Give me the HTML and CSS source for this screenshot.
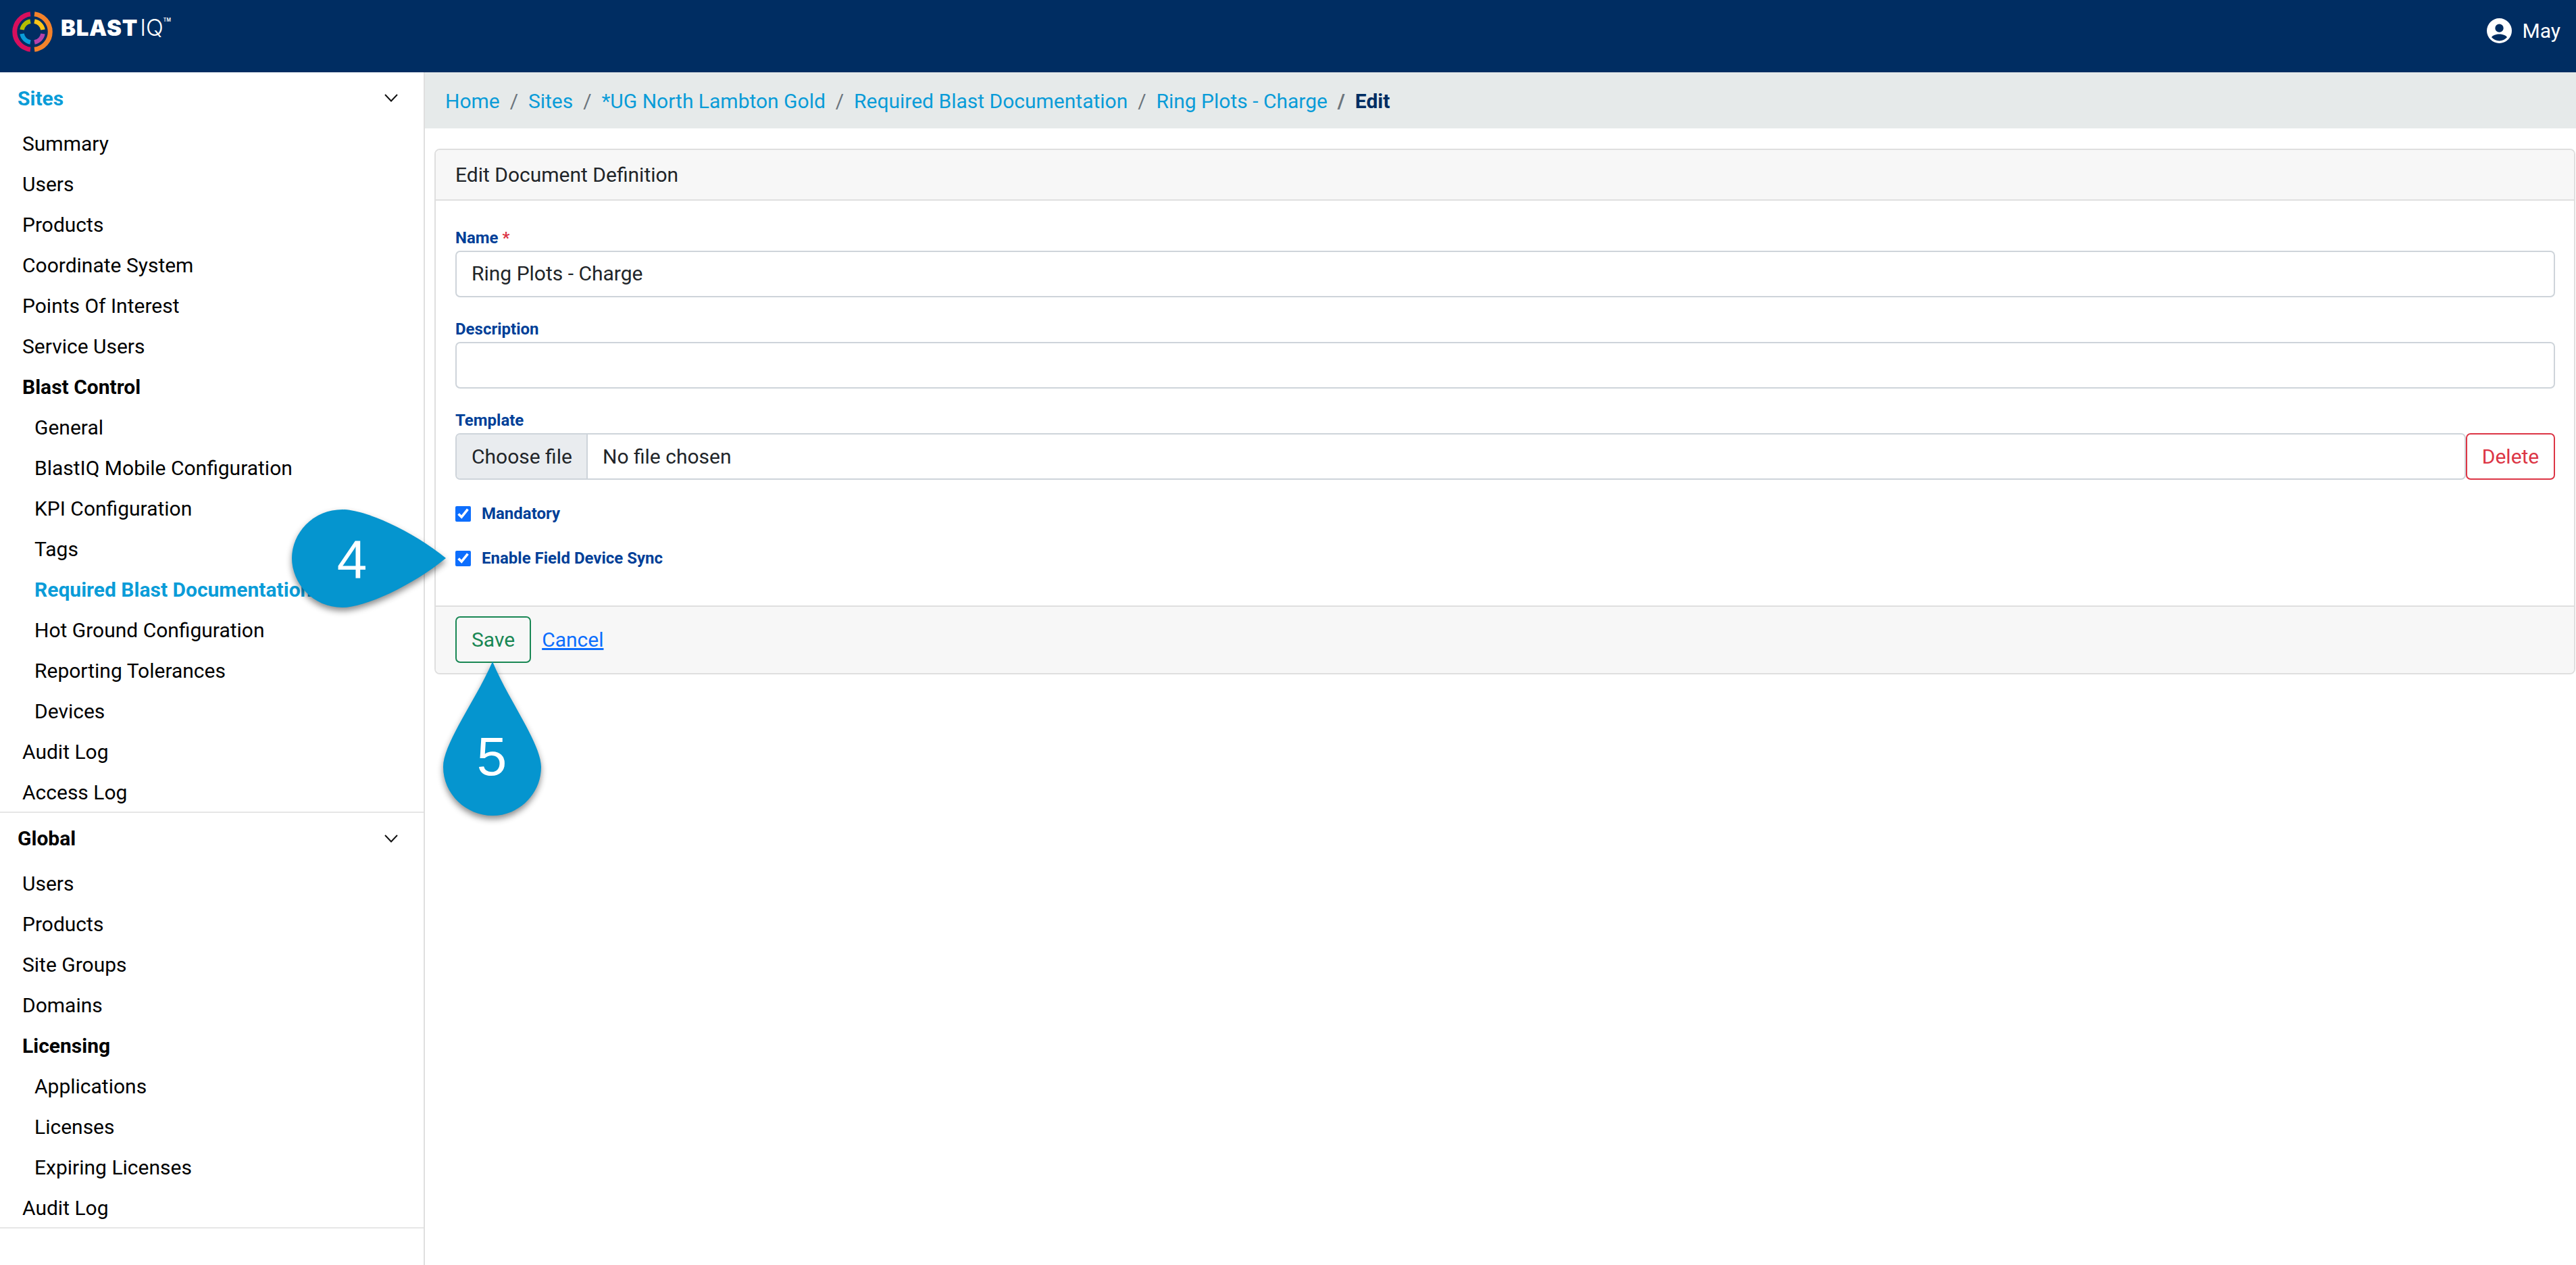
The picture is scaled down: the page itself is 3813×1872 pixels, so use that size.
FILE: index.html
```html
<!DOCTYPE html>
<html lang="en">
<head>
    <meta charset="UTF-8">
    <title>BlastIQ - Edit Document Definition</title>
    <link rel="stylesheet" href="styles.css">
</head>
<body>
    <header class="topbar">
        <a class="logo" href="#">
            <svg class="logo-mark" viewBox="0 0 60 60" width="60" height="60">
                <g fill="none" stroke-width="7">
                    <path stroke="#d80f5d" d="M27 3.700 A26.500 26.500 0 0 0 27 56.300"/>
                    <path stroke="#f5822a" d="M33 3.700 A26.500 26.500 0 0 1 33 56.300"/>
                </g>
                <g fill="none" stroke-width="6.500">
                    <path stroke="#b4bd00" d="M27 14.500 A15.800 15.800 0 0 0 14.500 27"/>
                    <path stroke="#fcc419" d="M33 14.500 A15.800 15.800 0 0 1 45.500 27"/>
                    <path stroke="#0a9cd8" d="M14.500 33 A15.800 15.800 0 0 0 27 45.500"/>
                    <path stroke="#b541a9" d="M45.500 33 A15.800 15.800 0 0 1 33 45.500"/>
                </g>
            </svg>
            <span class="logo-text"><b>BLAST</b><span class="logo-iq">IQ</span><sup>TM</sup></span>
        </a>
        <div class="user">
            <svg viewBox="0 0 24 24" width="37" height="37"><path fill="#fff" fill-rule="evenodd" d="M12 0a12 12 0 1 0 0 24 12 12 0 0 0 0-24zm0 5.500a4 4 0 1 1 0 8 4 4 0 0 1 0-8zm0 16.200c-3 0-5.700-1.300-7.400-3.300.4-2 4.900-3.200 7.400-3.200s7 1.200 7.400 3.200c-1.700 2-4.400 3.300-7.400 3.300z"/></svg>
            <span>May</span>
        </div>
    </header>

    <div class="layout">
        <nav class="sidebar">
            <section class="nav-section">
                <div class="nav-head active">Sites
                    <svg class="chevron" viewBox="0 0 20 12" width="20" height="12"><path d="M1 1l9 9.500 9-9.500" fill="none" stroke="#111" stroke-width="2"/></svg>
                </div>
                <a class="nav-item" href="#">Summary</a>
                <a class="nav-item" href="#">Users</a>
                <a class="nav-item" href="#">Products</a>
                <a class="nav-item" href="#">Coordinate System</a>
                <a class="nav-item" href="#">Points Of Interest</a>
                <a class="nav-item" href="#">Service Users</a>
                <a class="nav-item group" href="#">Blast Control</a>
                <a class="nav-item sub" href="#">General</a>
                <a class="nav-item sub" href="#">BlastIQ Mobile Configuration</a>
                <a class="nav-item sub" href="#">KPI Configuration</a>
                <a class="nav-item sub" href="#">Tags</a>
                <a class="nav-item sub current" href="#">Required Blast Documentation</a>
                <a class="nav-item sub" href="#">Hot Ground Configuration</a>
                <a class="nav-item sub" href="#">Reporting Tolerances</a>
                <a class="nav-item sub" href="#">Devices</a>
                <a class="nav-item" href="#">Audit Log</a>
                <a class="nav-item" href="#">Access Log</a>
            </section>
            <section class="nav-section">
                <div class="nav-head">Global
                    <svg class="chevron" viewBox="0 0 20 12" width="20" height="12"><path d="M1 1l9 9.500 9-9.500" fill="none" stroke="#111" stroke-width="2"/></svg>
                </div>
                <a class="nav-item" href="#">Users</a>
                <a class="nav-item" href="#">Products</a>
                <a class="nav-item" href="#">Site Groups</a>
                <a class="nav-item" href="#">Domains</a>
                <a class="nav-item group" href="#">Licensing</a>
                <a class="nav-item sub" href="#">Applications</a>
                <a class="nav-item sub" href="#">Licenses</a>
                <a class="nav-item sub" href="#">Expiring Licenses</a>
                <a class="nav-item" href="#">Audit Log</a>
            </section>
        </nav>

        <main class="content">
            <ol class="breadcrumb">
                <li><a href="#">Home</a></li>
                <li><a href="#">Sites</a></li>
                <li><a href="#">*UG North Lambton Gold</a></li>
                <li><a href="#">Required Blast Documentation</a></li>
                <li><a href="#">Ring Plots - Charge</a></li>
                <li class="here">Edit</li>
            </ol>

            <form class="card">
                <div class="card-header">Edit Document Definition</div>
                <div class="card-body">
                    <div class="field">
                        <label for="name">Name <span class="required">*</span></label>
                        <input class="control" id="name" type="text" value="Ring Plots - Charge">
                    </div>
                    <div class="field">
                        <label for="description">Description</label>
                        <input class="control" id="description" type="text">
                    </div>
                    <div class="field">
                        <label>Template</label>
                        <div class="input-row">
                            <div class="control file">
                                <span class="file-button">Choose file</span>
                                <span>No file chosen</span>
                            </div>
                            <button class="btn btn-delete" type="button">Delete</button>
                        </div>
                    </div>
                    <label class="check"><input type="checkbox" checked> Mandatory</label>
                    <label class="check"><input type="checkbox" checked> Enable Field Device Sync</label>
                </div>
                <div class="card-footer">
                    <button class="btn btn-save" type="button">Save</button>
                    <a class="cancel" href="#">Cancel</a>
                </div>
            </form>
        </main>
    </div>

    <!-- numbered callouts drawn on top of the screenshot -->
    <svg class="callouts" viewBox="0 0 3813 1872" width="3813" height="1872">
        <g class="callout">
            <path d="M660 826C610 785 540 754 507 754C462 754 432 790 432 826C432 862 462 899 507 899C540 899 610 867 660 826Z"/>
            <text x="521" y="855">4</text>
        </g>
        <g class="callout">
            <path d="M729 979C705 1035 656 1100 656 1135C656 1175 690 1207 729 1207C768 1207 801 1175 801 1135C801 1100 752 1035 729 979Z"/>
            <text x="728" y="1147">5</text>
        </g>
    </svg>
</body>
</html>
```

FILE: styles.css
```css
:root {
    --navy: #002d62;
    --sky: #0a9cd8;
    --border: #dfdfdf;
    --input-border: #ced4da;
    --label: #003f98;
}

* {
    box-sizing: border-box;
}

html, body {
    height: 100%;
}

body {
    margin: 0;
    position: relative;
    overflow: hidden;
    background: #fff;
    color: #212529;
    font-family: Roboto, "Liberation Sans", sans-serif;
    font-size: 30px;
    line-height: 1.5;
}

a {
    text-decoration: none;
}

/* Top bar */
.topbar {
    height: 107px;
    display: flex;
    align-items: flex-start;
    justify-content: space-between;
    background: var(--navy);
    color: #fff;
}

.logo {
    display: flex;
    align-items: flex-start;
    margin: 17px 0 0 18px;
    color: #fff;
}

.logo-text {
    display: flex;
    align-items: flex-start;
    margin: 6px 0 0 12px;
    font-family: Inter, sans-serif;
    font-size: 33px;
    line-height: 36px;
}

.logo-text b {
    font-weight: 900;
    letter-spacing: 0.7px;
}

.logo-iq {
    margin-left: 3px;
    font-weight: 300;
    font-size: 34px;
}

.logo-text sup {
    font-size: 7px;
    line-height: 10px;
    margin-top: 2px;
    font-weight: 600;
}

.user {
    display: flex;
    align-items: center;
    gap: 16px;
    height: 37px;
    margin: 27px 23px 0 0;
}

.user svg {
    display: block;
}

/* Layout */
.layout {
    display: flex;
    height: calc(100% - 107px);
}

.sidebar {
    width: 629px;
    flex: none;
    border-right: 2px solid var(--border);
}

.nav-section {
    border-bottom: 2px solid #e6e6e6;
}

.nav-head {
    height: 76px;
    padding: 0 38px 0 26px;
    display: flex;
    align-items: center;
    justify-content: space-between;
    color: #000;
    font-weight: 700;
}

.nav-section + .nav-section .nav-head {
    height: 75px;
}

.nav-head.active {
    color: var(--sky);
}

.nav-item {
    display: block;
    height: 60px;
    line-height: 60px;
    padding-left: 33px;
    color: #000;
    white-space: nowrap;
}

.nav-item:last-child {
    height: 58px;
}

.nav-item.group {
    font-weight: 700;
}

.nav-item.sub {
    padding-left: 51px;
}

.nav-item.current {
    color: var(--sky);
    font-weight: 700;
}

.content {
    flex: 1;
    min-width: 0;
}

/* Breadcrumb */
.breadcrumb {
    list-style: none;
    display: flex;
    align-items: center;
    height: 83px;
    margin: 0;
    padding: 1px 0 0 30px;
    background: #e6eaea;
}

.breadcrumb a {
    color: var(--sky);
}

.breadcrumb li + li::before {
    content: "/";
    padding: 0 14.9px;
    color: #6c757d;
}

.breadcrumb .here {
    color: var(--navy);
    font-weight: 700;
}

/* Card */
.card {
    margin: 30px 1px 0 14px;
    border: 2px solid var(--border);
    border-radius: 8px;
}

.card-header {
    height: 75px;
    line-height: 74px;
    padding: 0 29px;
    background: #f7f7f7;
    border-bottom: 2px solid var(--border);
    border-radius: 6px 6px 0 0;
}

.card-body {
    padding: 38px 28px 50px 29px;
}

.field {
    margin-bottom: 30px;
}

.field label {
    display: block;
    height: 36px;
    color: var(--label);
    font-size: 24px;
    line-height: 35px;
    font-weight: 700;
}

.required {
    color: #dc3545;
}

.control {
    display: block;
    width: 100%;
    height: 69px;
    padding: 0 22px 3px;
    border: 2px solid var(--input-border);
    border-radius: 7px;
    background: #fff;
    color: #212529;
    font: inherit;
}

.input-row {
    display: flex;
}

.file {
    flex: 1;
    width: auto;
    min-width: 0;
    display: flex;
    align-items: center;
    gap: 22px;
    padding: 0;
    overflow: hidden;
}

.file-button {
    display: flex;
    align-items: center;
    height: 100%;
    width: 194px;
    padding-left: 22px;
    border-right: 2px solid var(--input-border);
    background: #e9ecef;
}

.check {
    display: flex;
    align-items: center;
    gap: 16px;
    height: 40px;
    margin-bottom: 26px;
    color: var(--label);
    font-size: 24px;
    font-weight: 700;
}

.check:last-child {
    margin-bottom: 0;
}

.check input {
    width: 23px;
    height: 23px;
    margin: 0;
    accent-color: #0d6efd;
}

.card-footer {
    display: flex;
    align-items: center;
    gap: 16px;
    height: 100px;
    padding: 0 29px 2px;
    background: #f7f7f7;
    border-top: 2px solid var(--border);
    border-radius: 0 0 6px 6px;
}

.btn {
    height: 69px;
    padding: 0 22px;
    border: 2px solid;
    border-radius: 7px;
    background: transparent;
    font: inherit;
}

.btn-save {
    color: #198754;
    border-color: #198754;
}

.btn-delete {
    width: 132px;
    padding: 0;
    color: #dc3545;
    border-color: #dc3545;
}

.cancel {
    color: #0d6efd;
    text-decoration: underline;
}

/* Callouts */
.callouts {
    position: absolute;
    top: 0;
    left: 0;
    pointer-events: none;
}

.callout path {
    fill: #0595cf;
    filter: drop-shadow(0 5px 5px rgba(0, 0, 0, 0.45));
}

.callout text {
    fill: #fff;
    font-family: "Liberation Sans", sans-serif;
    font-size: 80px;
    text-anchor: middle;
}
```
